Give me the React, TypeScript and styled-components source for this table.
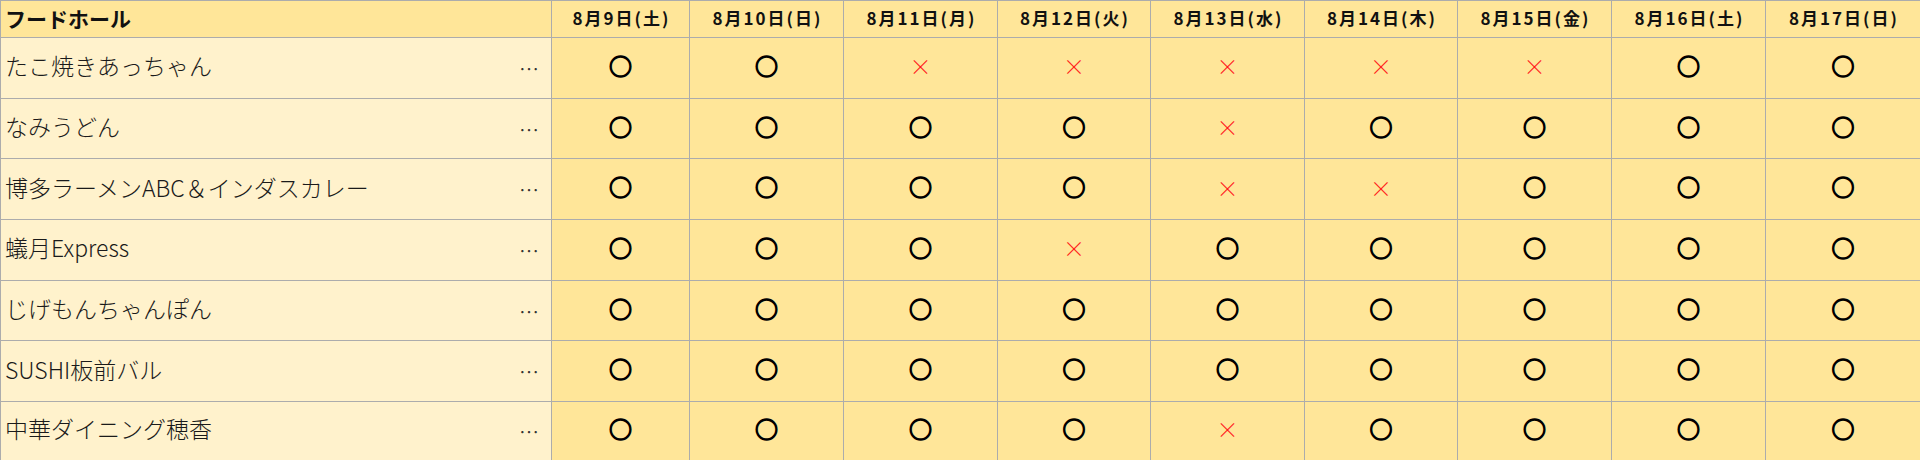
import React from "react";
import styled, { createGlobalStyle } from "styled-components";

const GlobalStyle = createGlobalStyle`
  html, body {
    margin: 0;
    padding: 0;
    background: #ffffff;
  }
  body {
    font-family: "Noto Sans CJK JP", "Noto Sans", sans-serif;
  }
`;

const colors = {
  header: "#ffe699",
  name: "#fff2cc",
  cell: "#ffe699",
  line: "#acacac",
  ng: "#ff1a1a",
};

const Sheet = styled.div`
  display: grid;
  width: 1920px;
  height: 460px;
  grid-template-columns: 551px 138px 154px 154px 153px 154px 153px 154px 154px 155px;
  grid-template-rows: 37px repeat(6, 60.7px) 58.5px;
  border-top: 1px solid ${colors.line};
  border-left: 1px solid ${colors.line};
  box-sizing: border-box;
  overflow: hidden;
`;

const Cell = styled.div`
  box-sizing: border-box;
  border-right: 1px solid ${colors.line};
  border-bottom: 1px solid ${colors.line};
  display: flex;
  align-items: center;
`;

const HeadTitle = styled(Cell)`
  background: ${colors.header};
  padding: 0 0 3px 4px;
  font-size: 21px;
  font-weight: 700;
  color: #111;
`;

const HeadDate = styled(Cell)<{ $last?: boolean }>`
  background: ${colors.header};
  justify-content: center;
  padding: 0 0 3px 2px;
  font-size: 17px;
  font-weight: 700;
  letter-spacing: 2px;
  color: #111;
  border-right-color: ${(p) => (p.$last ? "#333" : colors.line)};
`;

const NameCell = styled(Cell)`
  background: ${colors.name};
  justify-content: space-between;
  padding: 0 12px 5px 4px;
  font-size: 23px;
  font-weight: 300;
  color: #1a1a1a;
`;

const More = styled.span`
  font-size: 20px;
  color: #333;
  transform: translateY(3px);
`;

const Mark = styled(Cell)<{ $ok: boolean }>`
  background: ${colors.cell};
  justify-content: center;
  padding-bottom: 5px;
  font-size: ${(p) => (p.$ok ? "23px" : "22px")};
  font-weight: ${(p) => (p.$ok ? 700 : 300)};
  color: ${(p) => (p.$ok ? "#000" : colors.ng)};
  -webkit-text-stroke: ${(p) => (p.$ok ? "1.3px #000" : "0")};
  line-height: 1;
`;

const dates = [
  "8月9日(土)",
  "8月10日(日)",
  "8月11日(月)",
  "8月12日(火)",
  "8月13日(水)",
  "8月14日(木)",
  "8月15日(金)",
  "8月16日(土)",
  "8月17日(日)",
];

const shops: { name: string; marks: string }[] = [
  { name: "たこ焼きあっちゃん", marks: "ooxxxxxoo" },
  { name: "なみうどん", marks: "ooooxoooo" },
  { name: "博多ラーメンABC＆インダスカレー", marks: "ooooxxooo" },
  { name: "蟻月Express", marks: "oooxooooo" },
  { name: "じげもんちゃんぽん", marks: "ooooooooo" },
  { name: "SUSHI板前バル", marks: "ooooooooo" },
  { name: "中華ダイニング穂香", marks: "ooooxoooo" },
];

export default function App() {
  return (
    <>
      <GlobalStyle />
      <Sheet>
        <HeadTitle>フードホール</HeadTitle>
        {dates.map((d, i) => (
          <HeadDate key={d} $last={i === dates.length - 1}>
            {d}
          </HeadDate>
        ))}
        {shops.map((s) => (
          <React.Fragment key={s.name}>
            <NameCell>
              <span>{s.name}</span>
              <More>…</More>
            </NameCell>
            {s.marks.split("").map((m, i) => (
              <Mark key={i} $ok={m === "o"}>
                {m === "o" ? "○" : "×"}
              </Mark>
            ))}
          </React.Fragment>
        ))}
      </Sheet>
    </>
  );
}
